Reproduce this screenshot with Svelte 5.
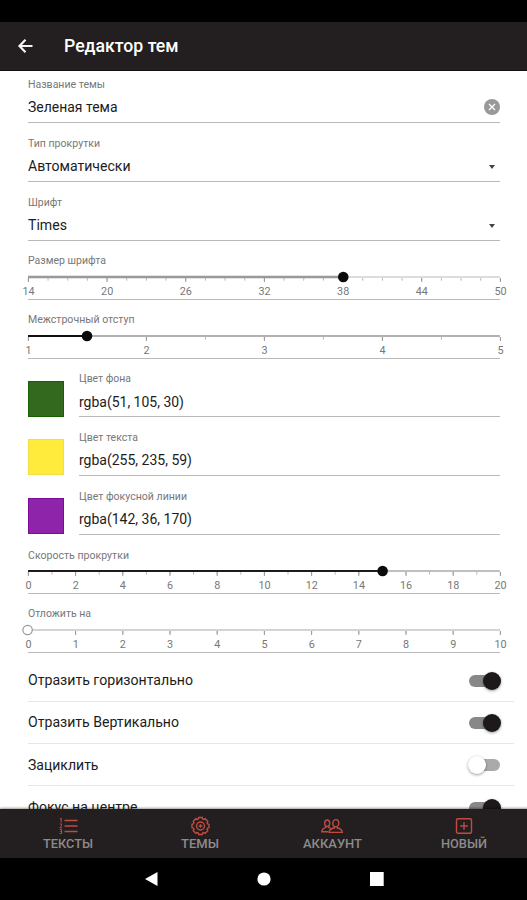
<script>
  const range = (from, to, step) => {
    const out = [];
    for (let v = from; v <= to + 0.001; v += step) out.push(v);
    return out;
  };
  const rows = [
    { kind: 'text', label: 'Название темы', w: 77, value: 'Зеленая тема', vw: 89.5, action: 'clear' },
    { kind: 'text', label: 'Тип прокрутки', w: 72, value: 'Автоматически', vw: 102.5, action: 'drop' },
    { kind: 'text', label: 'Шрифт', w: 34, value: 'Times', vw: 39, action: 'drop' },
    { kind: 'slider', label: 'Размер шрифта', w: 78, min: 14, max: 50, step: 6, minor: 1.5, now: 38, bar: '#999', base: '#d0d0d0', thick: 2.5 },
    { kind: 'slider', label: 'Межстрочный отступ', w: 106.5, min: 1, max: 5, step: 1, minor: 0.5, now: 1.495, bar: '#111', base: '#999', thick: 2 },
    { kind: 'color', label: 'Цвет фона', w: 52, value: 'rgba(51, 105, 30)', vw: 105, color: 'rgb(51,105,30)', edge: '#176000' },
    { kind: 'color', label: 'Цвет текста', w: 59, value: 'rgba(255, 235, 59)', vw: 113, color: 'rgb(255,235,59)', edge: '#f2df48' },
    { kind: 'color', label: 'Цвет фокусной линии', w: 108, value: 'rgba(142, 36, 170)', vw: 113, color: 'rgb(142,36,170)', edge: '#7d0b9a' },
    { kind: 'slider', label: 'Скорость прокрутки', w: 101, min: 0, max: 20, step: 2, minor: 1, now: 15, bar: '#1d1b1c', base: '#aaa', thick: 2 },
    { kind: 'slider', label: 'Отложить на', w: 63, min: 0, max: 10, step: 1, minor: 1, now: 0, bar: '#ccc', base: '#c6c6c6', thick: 2 }
  ];
  const toggles = [
    { label: 'Отразить горизонтально', w: 165, on: true },
    { label: 'Отразить Вертикально', w: 151, on: true },
    { label: 'Зациклить', w: 70.5, on: false },
    { label: 'Фокус на центре', w: 109.5, on: true }
  ];
  const tabs = [
    { label: 'ТЕКСТЫ', w: 50, icon: 'list' },
    { label: 'ТЕМЫ', w: 38, icon: 'gear' },
    { label: 'АККАУНТ', w: 59, icon: 'people' },
    { label: 'НОВЫЙ', w: 46, icon: 'plus' }
  ];
  const W = 472;
  const pos = (r, v) => ((v - r.min) / (r.max - r.min)) * W;
  const gear = Array.from({ length: 8 }, (_, i) => {
    const p = (deg, rad) => {
      const a = ((deg + i * 45 - 90) * Math.PI) / 180;
      return `${(9.5 + rad * Math.cos(a)).toFixed(2)} ${(9 + rad * Math.sin(a)).toFixed(2)}`;
    };
    return `${p(-12, 8.7)}L${p(12, 8.7)}L${p(17, 7.4)}L${p(28, 7.4)}`;
  }).join('L');
</script>

{#snippet line(text, width, size, cls, weight = 400)}
  <svg class="line {cls}" {width} height="20"><text x="0" y="14" font-size={size} font-weight={weight} textLength={width} lengthAdjust="spacingAndGlyphs">{text}</text></svg>
{/snippet}

<div class="screen">
  <div class="status"></div>
  <header>
    <svg class="back" width="16" height="16" viewBox="0 0 16 16"><path d="M14.5 8H1.5M7.5 1.8L1.5 8L7.5 14.2" /></svg>
    {@render line('Редактор тем', 114.5, 18, 'title', 500)}
  </header>

  <main>
    {#each rows as r}
      <section>
        {#if r.kind === 'color'}
          <i class="swatch" style:background={r.color} style:border-color={r.edge}></i>
        {/if}
        <div class="field">
          {@render line(r.label, r.w, 10.8, 'label')}
          {#if r.kind === 'slider'}
            <svg class="slider" width={W} height="30">
              <line x1="0" x2={W} y1="10" y2="10" stroke={r.base} stroke-width="1.6" />
              <line x1="0" x2={pos(r, r.now)} y1="10" y2="10" stroke={r.bar} stroke-width={r.thick} />
              {#each range(r.min, r.max, r.minor) as v}
                <line x1={pos(r, v) + 0.4} x2={pos(r, v) + 0.4} y1="11" y2="13.7" stroke="#b8b8b8" />
              {/each}
              {#each range(r.min, r.max, r.step) as v}
                <line x1={pos(r, v) + 0.4} x2={pos(r, v) + 0.4} y1="11" y2="15" stroke="#999" />
                <text x={pos(r, v) + 0.5} y="27.6" text-anchor="middle">{v}</text>
              {/each}
              {#if r.now > r.min}
                <circle cx={pos(r, r.now) + 0.6} cy="10" r="5.3" fill="#0c0b0c" />
              {:else}
                <circle cx="-0.4" cy="10" r="4.7" fill="#fff" stroke="#999" stroke-width="1.2" />
              {/if}
            </svg>
          {:else}
            <div class="value">
              {@render line(r.value, r.vw, 14.3, '')}
              {#if r.action === 'clear'}
                <svg class="clear" width="16" height="16" viewBox="0 0 16 16"><circle cx="8" cy="8" r="8" fill="#999" /><path d="M5 5L11 11M11 5L5 11" stroke="#fff" stroke-width="1.4" /></svg>
              {:else if r.action === 'drop'}
                <svg class="drop" width="6" height="4" viewBox="0 0 6 4"><path d="M0 0H6L3 4Z" fill="#444" /></svg>
              {/if}
            </div>
          {/if}
        </div>
      </section>
    {/each}
    <div class="toggles">
      {#each toggles as t}
        <div class="toggle">
          {@render line(t.label, t.w, 14.3, 'caption')}
          <span class="switch" class:on={t.on}><i></i></span>
        </div>
      {/each}
    </div>
  </main>

  <nav class="tabs">
    {#each tabs as t}
      <div class="tab">
        {#if t.icon === 'list'}
          <svg width="19" height="18"><path d="M5.5 3.5H18.5M5.5 9H18.5M5.5 14.5H18.5" /><path stroke-width="1" d="M.8 2.2L2.2 1.2V5.6M.8 7H2.6V8.6L.9 10.8H3M.8 12.4H2.6V16.6H.6M1.2 14.5H2.6" /></svg>
        {:else if t.icon === 'gear'}
          <svg width="19" height="18"><path d="M{gear}Z" /><circle cx="9.5" cy="9" r="4" /><path d="M7.7 9H11.3M9.5 7.2V10.8" /></svg>
        {:else if t.icon === 'people'}
          <svg width="22" height="18"><ellipse cx="6.2" cy="6.2" rx="2.5" ry="3.2" /><ellipse cx="14.8" cy="6.2" rx="3" ry="3.6" /><path d="M4.9 9V10.4Q1 11.5 .8 14.8H7M13.3 9.6V11Q8.4 11.7 8 15.4H21.3Q21 11.7 16.3 11V9.6M7.5 9V10.4L9.6 11.4" /></svg>
        {:else}
          <svg width="18" height="18"><rect x="1.5" y="1.8" width="15" height="14.4" rx="1.5" /><path d="M9 5.2V12.8M5.2 9H12.8" /></svg>
        {/if}
        {@render line(t.label, t.w, 12.9, 'tablabel', 500)}
      </div>
    {/each}
  </nav>
  <footer>
    <svg width="13" height="14"><path d="M0 7L12.5 0V14Z" /></svg>
    <svg width="14" height="14"><circle cx="7" cy="7" r="6.6" /></svg>
    <svg width="14" height="14"><rect width="13.7" height="14" /></svg>
  </footer>
</div>

<style>
  .screen {
    width: 527px;
    height: 900px;
    display: flex;
    flex-direction: column;
    background: #fff;
    font-family: Roboto, 'Noto Sans', sans-serif;
    overflow: hidden;
  }
  svg { display: block; flex: none; overflow: visible; }
  .status { height: 22px; background: #000; flex: none; }
  header {
    height: 48.5px;
    flex: none;
    box-sizing: border-box;
    display: flex;
    align-items: center;
    gap: 30px;
    padding-left: 17.5px;
    background: #231f20;
    border-bottom: 1px solid #111;
  }
  .back { fill: none; stroke: #f3f3f3; stroke-width: 2.2; }
  .title { fill: #fff; margin-top: 5px; }
  main { height: 738.5px; flex: none; overflow: hidden; }
  section {
    height: 58.83px;
    padding: 0 27px 0 28px;
    display: flex;
    box-sizing: border-box;
  }
  section:first-child { margin-top: -6px; }
  .swatch {
    width: 36px;
    height: 36px;
    box-sizing: border-box;
    border: 1px solid;
    margin: 22px 15px 0 0;
    flex: none;
  }
  .field {
    flex: 1;
    min-width: 0;
    border-bottom: 1.4px solid #b9b9b9;
    display: flex;
    flex-direction: column;
    padding-top: 9.4px;
    box-sizing: border-box;
  }
  .label { fill: #777; }
  .value {
    display: flex;
    justify-content: space-between;
    align-items: center;
    height: 20px;
    margin-top: 4.5px;
    fill: #1c1c1c;
  }
  .clear { margin-top: -3px; }
  .drop { margin-right: 5px; margin-top: -1px; }
  .slider { margin-top: -3.3px; }
  .slider text { font-size: 10.8px; fill: #777; }
  .toggles { padding: 6.7px 13px 0 28px; }
  .toggle {
    display: flex;
    align-items: center;
    justify-content: space-between;
    height: 42.3px;
    box-sizing: border-box;
    padding-right: 14px;
    border-bottom: 1px solid #e6e6e6;
    fill: #1c1c1c;
  }
  .caption { margin-top: 2px; }
  .switch {
    width: 31px;
    height: 12px;
    border-radius: 6px;
    background: #aaa;
    position: relative;
    margin-top: 1px;
  }
  .switch i {
    position: absolute;
    left: -1px;
    top: -3px;
    width: 18px;
    height: 18px;
    border-radius: 50%;
    background: #fff;
    box-shadow: 0 1px 3px rgba(0, 0, 0, 0.4);
  }
  .switch.on { background: #888; }
  .switch.on i { left: 14px; background: #1d191a; }
  .tabs {
    height: 49px;
    flex: none;
    display: flex;
    background: #231f20;
    box-shadow: 0 -1px 2px rgba(0, 0, 0, 0.4);
    position: relative;
    padding-left: 2px;
    margin-right: -3px;
    box-sizing: border-box;
  }
  .tab {
    flex: 1;
    display: flex;
    flex-direction: column;
    align-items: center;
    padding-top: 8px;
  }
  .tab svg { fill: none; stroke: #bf4b41; stroke-width: 1.4; }
  .tab :global(svg.tablabel) { fill: #8d8b8c; stroke: none; margin-top: -1.5px; }
  footer {
    height: 42px;
    flex: none;
    background: #000;
    display: flex;
    justify-content: center;
    align-items: center;
    gap: 99px;
    fill: #fff;
    padding-left: 2px;
  }
</style>
